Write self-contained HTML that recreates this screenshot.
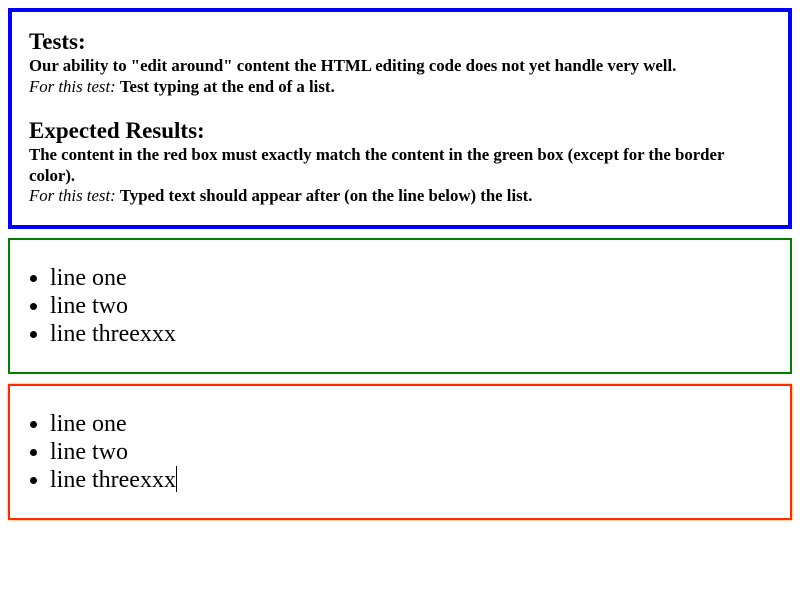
<!DOCTYPE html>
<html><head><style>
body{margin:0;background:#fff;font-family:"Liberation Serif",Times,serif;color:#000}
.box{position:absolute;left:8px;width:784px;box-sizing:border-box}
.exp{top:8px;height:221px;border:4px solid #0000ff;padding:18px 0 0 17px;font-size:16.8px;line-height:20.5px}
.exp b{font-size:23px;display:block;line-height:24px;margin-bottom:2px}
.t{font-weight:bold}
.ex{top:238px;height:136px;border:2px solid #008000}
.re{top:384px;height:136px;border:2px solid #ff2a00;box-shadow:0 0 2px #ff8800}
ul{margin:0;padding:0 0 0 40px;font-size:24px;line-height:28px;position:absolute;top:24px;left:0}
.cursor{display:inline-block;width:1px;height:26px;background:#000;vertical-align:-5px}
</style></head><body>
<div class="box exp">
<b>Tests:</b>
<div class="t">Our ability to "edit around" content the HTML editing code does not yet handle very well.</div>
<div><i>For this test:</i> <span class="t">Test typing at the end of a list.</span></div>
<div style="height:22px"></div>
<b>Expected Results:</b>
<div class="t" style="padding-right:20px">The content in the red box must exactly match the content in the green box (except for the border color).</div>
<div><i>For this test:</i> <span class="t">Typed text should appear after (on the line below) the list.</span></div>
</div>
<div class="box ex"><ul><li>line one</li><li>line two</li><li>line threexxx</li></ul></div>
<div class="box re"><ul><li>line one</li><li>line two</li><li>line threexxx<span class="cursor"></span></li></ul></div>
</body></html>
